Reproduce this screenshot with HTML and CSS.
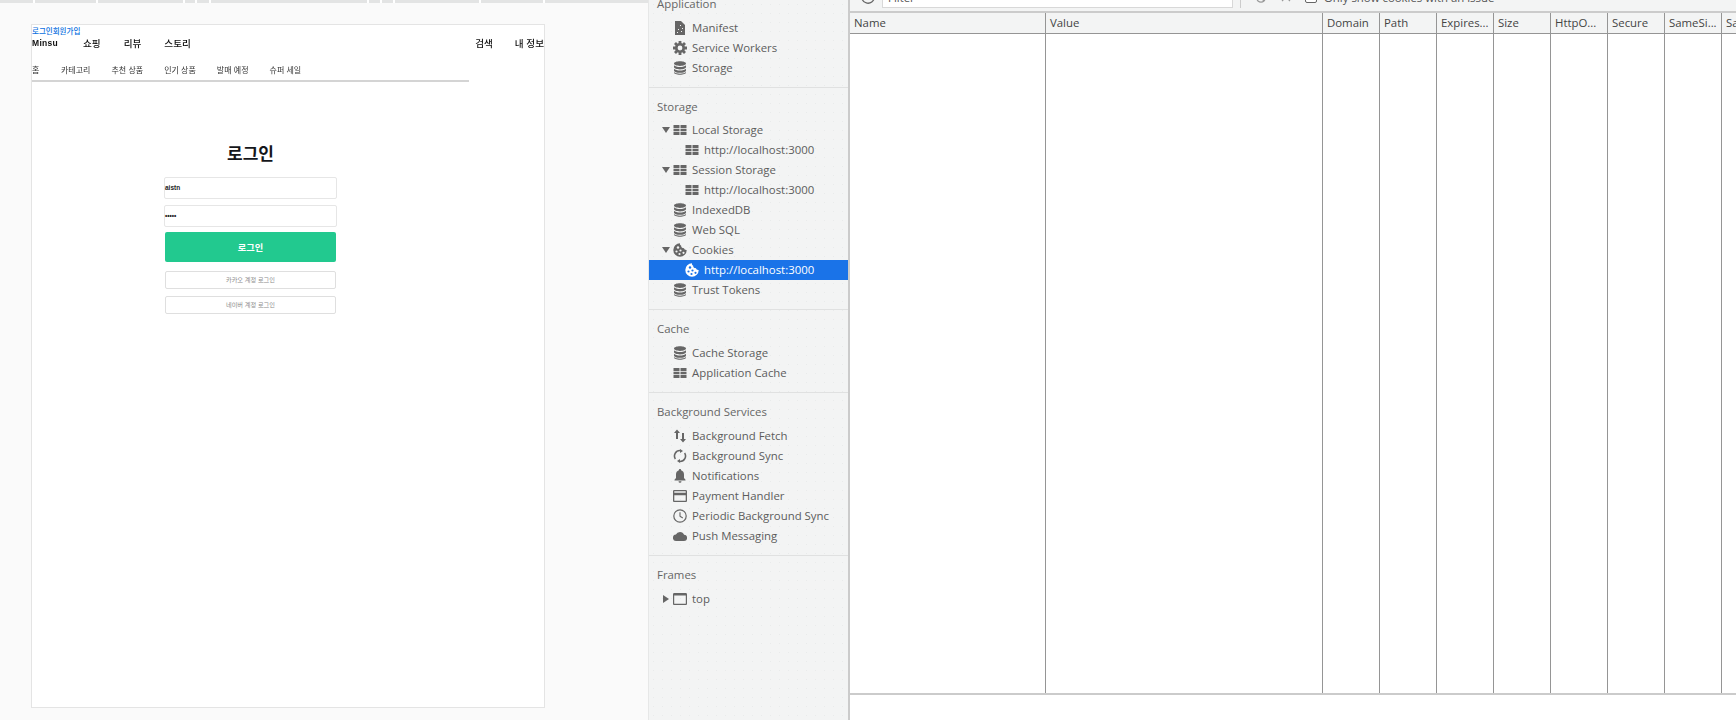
FILE: index.html
```html
<!DOCTYPE html>
<html lang="ko">
<head>
<meta charset="utf-8">
<title>로그인</title>
<link rel="stylesheet" href="styles.css">
</head>
<body>
<svg class="defs" width="0" height="0" aria-hidden="true">
  <symbol id="i-db" viewBox="0 0 14 14"><path d="M1 2.6C1 1.2 3.7.3 7 .3s6 .9 6 2.3-2.7 2.3-6 2.3-6-.9-6-2.3zM1 4.3c1 1.2 3.400 1.800 6 1.800s5-.6 6-1.800v1.800C13 7.500 10.300 8.400 7 8.400S1 7.500 1 6.100zM1 7.700c1 1.200 3.400 1.800 6 1.800s5-.6 6-1.800v1.800c0 1.400-2.700 2.300-6 2.300s-6-.9-6-2.300zM1 11c1 1.200 3.400 1.700 6 1.700s5-.5 6-1.700v.6c0 1.300-2.700 2.200-6 2.200s-6-.9-6-2.200z"/></symbol>
  <symbol id="i-table" viewBox="0 0 13 10"><path d="M0 0h6v3H0zM7 0h6v3H7zM0 3.700h6v2.600H0zM7 3.700h6v2.600H7zM0 7h6v3H0zM7 7h6v3H7z"/></symbol>
  <symbol id="i-doc" viewBox="0 0 10 14"><path d="M0 0h6l4 4v10H0z"/><g class="hole"><rect x="5" y="4" width="1" height="1"/><rect x="7" y="7" width="1" height="1"/><rect x="3" y="8" width="1" height="1"/><rect x="6" y="10" width="1" height="1"/><rect x="2" y="11" width="1" height="1"/></g></symbol>
  <symbol id="i-gear" viewBox="0 0 14 14"><circle cx="7" cy="7" r="3.700" fill="none" stroke="currentColor" stroke-width="2.600"/><g stroke="currentColor" stroke-width="2.800"><path d="M7 0v3M7 11v3M0 7h3M11 7h3M2 2l2.200 2.200M9.800 9.800L12 12M12 2L9.800 4.200M4.200 9.800L2 12"/></g></symbol>
  <symbol id="i-cookie" viewBox="0 0 14 14"><path d="M7 .3a6.700 6.700 0 1 0 6.700 6.700c-1.500.2-2.500-.6-2.800-1.900C9.400 5.300 8 4.300 8.200 2.700 7.200 2.500 6.800 1.400 7 .3z"/><g class="hole"><circle cx="5" cy="4.500" r="1.200"/><circle cx="3.500" cy="8.500" r="1.100"/><circle cx="7.500" cy="7.500" r="1.100"/><circle cx="6.500" cy="11" r="1.100"/><circle cx="10.500" cy="9.800" r="1.100"/></g></symbol>
  <symbol id="i-fetch" viewBox="0 0 14 14"><path d="M4 .5l3 3.500H5v6H3V4H1zM9 4h2v6h2l-3 3.500L7 10h2z"/></symbol>
  <symbol id="i-sync" viewBox="0 0 14 14"><path d="M7 2.300A4.700 4.700 0 0 0 3 9.500l-1.200 1A6.200 6.200 0 0 1 7 .8V0l3 2-3 2zM7 11.700A4.700 4.700 0 0 0 11 4.500l1.200-1A6.200 6.200 0 0 1 7 13.200V14l-3-2 3-2z"/></symbol>
  <symbol id="i-bell" viewBox="0 0 14 14"><path d="M7 0c.7 0 1.100.5 1.100 1.200C10 1.800 11 3.400 11 5.500V9l1.500 1.800v.7h-11v-.7L3 9V5.500c0-2.100 1-3.700 2.900-4.300C5.900.5 6.300 0 7 0zM5.500 12.300h3a1.500 1.500 0 0 1-3 0z"/></symbol>
  <symbol id="i-card" viewBox="0 0 14 12"><path fill-rule="evenodd" d="M1.300 0h11.400C13.500 0 14 .6 14 1.300v9.400c0 .7-.5 1.300-1.300 1.300H1.300C.5 12 0 11.400 0 10.700V1.300C0 .6.500 0 1.300 0zM1.300 1.300v1.400h11.400V1.300zM1.300 5.300v5.400h11.400V5.300z"/></symbol>
  <symbol id="i-clock" viewBox="0 0 14 14"><circle cx="7" cy="7" r="6.200" fill="none" stroke="currentColor" stroke-width="1.200"/><path d="M7 3.200V7.300l2.800 1.700" fill="none" stroke="currentColor" stroke-width="1.100"/></symbol>
  <symbol id="i-cloud" viewBox="0 0 14 10"><path d="M3.300 10A3.200 3.200 0 0 1 2.900 3.600 4.400 4.400 0 0 1 11.100 3.800 3.100 3.100 0 0 1 11 10z"/></symbol>
  <symbol id="i-frame" viewBox="0 0 14 12"><path fill-rule="evenodd" d="M1.300 0h11.400C13.500 0 14 .6 14 1.300v9.400c0 .7-.5 1.300-1.300 1.300H1.300C.5 12 0 11.400 0 10.700V1.300C0 .6.500 0 1.300 0zM1.200 2.400v8.400h11.600V2.400z"/></symbol>
  <symbol id="i-down" viewBox="0 0 8 6"><path d="M0 0h8L4 6z"/></symbol>
  <symbol id="i-right" viewBox="0 0 6 8"><path d="M0 0l6 4-6 4z"/></symbol>
  <symbol id="i-reload" viewBox="0 0 14 14"><path d="M11.500 2.500A6.300 6.300 0 1 0 13.300 7" fill="none" stroke="currentColor" stroke-width="1.300"/></symbol>
  <symbol id="i-clear" viewBox="0 0 16 14"><path d="M0 4h6v1.200H0z"/><circle cx="11" cy="8" r="4.200" fill="none" stroke="currentColor" stroke-width="1.200"/><path d="M8 5l6 6" stroke="currentColor" stroke-width="1.200"/></symbol>
  <symbol id="i-x" viewBox="0 0 10 10"><path d="M1 1l8 8M9 1l-8 8" stroke="currentColor" stroke-width="1.200"/></symbol>
</svg>

<div class="app">
  <section class="viewport">
    <div class="ticks"></div>
    <div class="phone">
      <a class="auth-link">로그인회원가입</a>
      <nav class="mainnav">
        <div class="mainnav-group">
          <span class="logo">Minsu</span>
          <span>쇼핑</span>
          <span>리뷰</span>
          <span>스토리</span>
        </div>
        <div class="mainnav-group mainnav-right">
          <span>검색</span>
          <span>내 정보</span>
        </div>
      </nav>
      <div class="column">
        <nav class="subnav">
          <span class="subnav-home">홈</span>
          <span>카테고리</span>
          <span>추천 상품</span>
          <span>인기 상품</span>
          <span>발매 예정</span>
          <span>슈퍼 세일</span>
        </nav>
        <form class="login">
          <h1 class="login-title">로그인</h1>
          <div class="field">aistn</div>
          <div class="field field-pass">•••••</div>
          <div class="btn-primary">로그인</div>
          <div class="btn-social">카카오 계정 로그인</div>
          <div class="btn-social">네이버 계정 로그인</div>
        </form>
      </div>
    </div>
  </section>

  <aside class="sidebar">
    <div class="side-scroll">
      <div class="side-section">
        <h2>Application</h2>
        <div class="row"><svg class="ic ic-doc"><use href="#i-doc"/></svg>Manifest</div>
        <div class="row"><svg class="ic"><use href="#i-gear"/></svg>Service Workers</div>
        <div class="row"><svg class="ic"><use href="#i-db"/></svg>Storage</div>
      </div>
      <div class="side-section">
        <h2>Storage</h2>
        <div class="row"><svg class="arrow"><use href="#i-down"/></svg><svg class="ic ic-table"><use href="#i-table"/></svg>Local Storage</div>
        <div class="row row-child"><svg class="ic ic-table"><use href="#i-table"/></svg>http://localhost:3000</div>
        <div class="row"><svg class="arrow"><use href="#i-down"/></svg><svg class="ic ic-table"><use href="#i-table"/></svg>Session Storage</div>
        <div class="row row-child"><svg class="ic ic-table"><use href="#i-table"/></svg>http://localhost:3000</div>
        <div class="row"><svg class="ic"><use href="#i-db"/></svg>IndexedDB</div>
        <div class="row"><svg class="ic"><use href="#i-db"/></svg>Web SQL</div>
        <div class="row"><svg class="arrow"><use href="#i-down"/></svg><svg class="ic"><use href="#i-cookie"/></svg>Cookies</div>
        <div class="row row-child row-selected"><svg class="ic"><use href="#i-cookie"/></svg>http://localhost:3000</div>
        <div class="row"><svg class="ic"><use href="#i-db"/></svg>Trust Tokens</div>
      </div>
      <div class="side-section">
        <h2>Cache</h2>
        <div class="row"><svg class="ic"><use href="#i-db"/></svg>Cache Storage</div>
        <div class="row"><svg class="ic ic-table"><use href="#i-table"/></svg>Application Cache</div>
      </div>
      <div class="side-section">
        <h2>Background Services</h2>
        <div class="row"><svg class="ic"><use href="#i-fetch"/></svg>Background Fetch</div>
        <div class="row"><svg class="ic"><use href="#i-sync"/></svg>Background Sync</div>
        <div class="row"><svg class="ic"><use href="#i-bell"/></svg>Notifications</div>
        <div class="row"><svg class="ic"><use href="#i-card"/></svg>Payment Handler</div>
        <div class="row"><svg class="ic"><use href="#i-clock"/></svg>Periodic Background Sync</div>
        <div class="row"><svg class="ic"><use href="#i-cloud"/></svg>Push Messaging</div>
      </div>
      <div class="side-section">
        <h2>Frames</h2>
        <div class="row"><svg class="arrow arrow-right"><use href="#i-right"/></svg><svg class="ic"><use href="#i-frame"/></svg>top</div>
      </div>
    </div>
  </aside>

  <main class="cookies">
    <div class="toolbar">
      <div class="toolbar-inner">
        <svg class="tool-reload"><use href="#i-reload"/></svg>
        <div class="filter">Filter</div>
        <span class="tool-sep"></span>
        <svg class="tool-clear"><use href="#i-clear"/></svg>
        <svg class="tool-x"><use href="#i-x"/></svg>
        <span class="tool-check"></span>
        <span class="tool-label">Only show cookies with an issue</span>
      </div>
    </div>
    <div class="grid">
      <div class="th">Name</div>
      <div class="th">Value</div>
      <div class="th">Domain</div>
      <div class="th">Path</div>
      <div class="th">Expires...</div>
      <div class="th">Size</div>
      <div class="th">HttpO...</div>
      <div class="th">Secure</div>
      <div class="th">SameSi...</div>
      <div class="th">Sa</div>
      <div class="td"></div><div class="td"></div><div class="td"></div><div class="td"></div><div class="td"></div>
      <div class="td"></div><div class="td"></div><div class="td"></div><div class="td"></div><div class="td"></div>
    </div>
  </main>
</div>
</body>
</html>
```

FILE: styles.css
```css
* { box-sizing: border-box; }
html, body { margin: 0; width: 1736px; height: 720px; overflow: hidden; background: #fff; }
.defs { position: absolute; top: 0; left: 0; display: block; }

.app { display: flex; width: 1736px; height: 720px; overflow: hidden; }

/* page preview */
.viewport {
  width: 648px;
  flex: none;
  background: #fafafa;
  font-family: "Noto Sans CJK KR", "Noto Sans", sans-serif;
}
.ticks {
  height: 3px;
  background:
    linear-gradient(#fff, #fff) 33px 0 / 2px 100% no-repeat,
    linear-gradient(#fff, #fff) 96px 0 / 2px 100% no-repeat,
    linear-gradient(#fff, #fff) 183px 0 / 2px 100% no-repeat,
    linear-gradient(#fff, #fff) 195px 0 / 2px 100% no-repeat,
    linear-gradient(#fff, #fff) 209px 0 / 2px 100% no-repeat,
    linear-gradient(#fff, #fff) 367px 0 / 2px 100% no-repeat,
    linear-gradient(#fff, #fff) 380px 0 / 2px 100% no-repeat,
    linear-gradient(#fff, #fff) 393px 0 / 2px 100% no-repeat,
    linear-gradient(#fff, #fff) 479px 0 / 2px 100% no-repeat,
    linear-gradient(#fff, #fff) 543px 0 / 2px 100% no-repeat,
    #e3e4e4;
}
.phone {
  width: 514px;
  height: 684px;
  margin: 21px 0 0 31px;
  background: #fff;
  border: 1px solid #e4e4e4;
  overflow: hidden;
  color: #111;
}
.auth-link {
  display: block;
  height: 12px;
  font-size: 7.500px;
  line-height: 12px;
  font-weight: 500;
  color: #0a6fe0;
}
.mainnav {
  display: flex;
  justify-content: space-between;
  width: 512px;
  height: 14px;
  font-size: 9.600px;
  line-height: 13px;
  font-weight: 500;
  filter: blur(.25px);
}
.mainnav-group { display: flex; gap: 23px; }
.mainnav-right { gap: 22px; white-space: nowrap; }
.logo { width: 28px; font: 800 8.500px/13px "Liberation Sans", sans-serif; letter-spacing: .3px; }
.column { width: 437px; }
.subnav {
  display: flex;
  gap: 21px;
  height: 31px;
  padding-top: 12px;
  font-size: 8px;
  line-height: 13px;
  color: #333;
  border-bottom: 2px solid #d4d4d4;
}
.subnav span { filter: blur(.3px); white-space: nowrap; }
.subnav-home { width: 8px; }
.login { display: flex; flex-direction: column; width: 173px; margin: 0 auto; }
.login-title {
  margin: 61px 0 14px;
  height: 20px;
  font-size: 17px;
  line-height: 20px;
  font-weight: 700;
  text-align: center;
  color: #14161a;
}
.field {
  height: 22px;
  margin-bottom: 6px;
  border: 1px solid #e6e6e6;
  border-radius: 2px;
  font: 700 6.500px/20px "Liberation Sans", sans-serif;
  color: #222;
}
.field-pass { margin-bottom: 5px; }
.btn-primary {
  height: 30px;
  margin: 0 1px 9px;
  border-radius: 2px;
  background: #22c98f;
  color: #fff;
  font-size: 9.200px;
  line-height: 30px;
  font-weight: 700;
  text-align: center;
}
.btn-social {
  height: 18px;
  margin: 0 1px 7px;
  border: 1px solid #dfdfdf;
  border-radius: 2px;
  background: #fff;
  color: #8a8a8a;
  font-size: 6.200px;
  line-height: 16px;
  text-align: center;
}

/* devtools sidebar */
.sidebar {
  width: 202px;
  flex: none;
  overflow: hidden;
  color: #5c5c5c;
  border-left: 1px solid #e6e7e7;
  border-right: 2px solid #cbcbcb;
  background-color: #f3f4f4;
  background-image: radial-gradient(#e9ebeb .6px, transparent .8px);
  background-size: 9px 9px;
  font: 11.400px "Open Sans", "Noto Sans", sans-serif;
}
.side-scroll { margin-top: -15px; }
.side-section { padding: 8px 0 9px; border-bottom: 1px solid #e0e1e1; }
.side-section:last-child { border-bottom: 0; }
.side-section h2 {
  height: 22px;
  margin: 0 0 3px 8px;
  font-size: inherit;
  font-weight: 400;
  line-height: 22px;
  color: #666;
}
.side-section:nth-child(2) h2 { margin-bottom: 2px; }
.row {
  position: relative;
  display: flex;
  align-items: center;
  height: 20px;
  padding-left: 24px;
  line-height: 20px;
  white-space: nowrap;
}
.ic {
  width: 14px;
  height: 14px;
  margin-right: 5px;
  flex: none;
  fill: #666;
  color: #666;
  --hole: #f3f4f4;
}
.ic-table { height: 10px; }
.ic-doc { height: 14px; }
.hole { fill: var(--hole); }
.arrow {
  position: absolute;
  left: 13px;
  top: 7px;
  width: 8px;
  height: 6px;
  fill: #666;
}
.arrow-right { left: 14px; top: 6px; width: 6px; height: 8px; }
.row-child { padding-left: 36px; }
.row-selected { background: #1a73e8; color: #fff; }
.row-selected .ic { fill: #fff; --hole: #1a73e8; }

/* cookies table */
.cookies { flex: 1; min-width: 0; display: flex; flex-direction: column; overflow: hidden; }
.toolbar {
  height: 13px;
  flex: none;
  overflow: hidden;
  border-bottom: 2px solid #cbcbcb;
  background: #f3f4f4;
  font: 11.400px "Open Sans", "Noto Sans", sans-serif;
  color: #555;
}
.toolbar-inner { display: flex; align-items: center; height: 22px; margin-top: -14px; padding-left: 11px; }
.tool-reload { width: 14px; height: 14px; color: #666; margin-right: 7px; }
.filter {
  width: 351px;
  height: 22px;
  padding-left: 5px;
  line-height: 22px;
  background: #fff;
  border: 1px solid #d8d8d8;
}
.tool-sep { width: 1px; height: 22px; margin: 0 9px 0 7px; background: #ccc; }
.tool-clear { width: 16px; height: 14px; fill: #999; color: #999; margin-right: 15px; }
.tool-x { width: 10px; height: 10px; color: #999; margin-right: 14px; }
.tool-check { width: 12px; height: 12px; margin-right: 7px; border: 1px solid #666; border-radius: 2px; background: #fff; }
.tool-label { white-space: nowrap; }
.grid {
  display: grid;
  grid-template-columns: 196px 277px repeat(7, 57px) 57px;
  grid-template-rows: 21px 1fr;
  height: 682px;
  width: 886px;
  flex: none;
  overflow: hidden;
  border-bottom: 2px solid #cbcbcb;
  color: #444;
  font: 11.400px "Open Sans", "Noto Sans", sans-serif;
}
.th {
  padding-left: 4px;
  line-height: 20px;
  white-space: nowrap;
  overflow: hidden;
  background: #f3f4f4;
  border-right: 1px solid #959595;
  border-bottom: 1px solid #959595;
}
.td { border-right: 1px solid #959595; background: #fff; }
```
